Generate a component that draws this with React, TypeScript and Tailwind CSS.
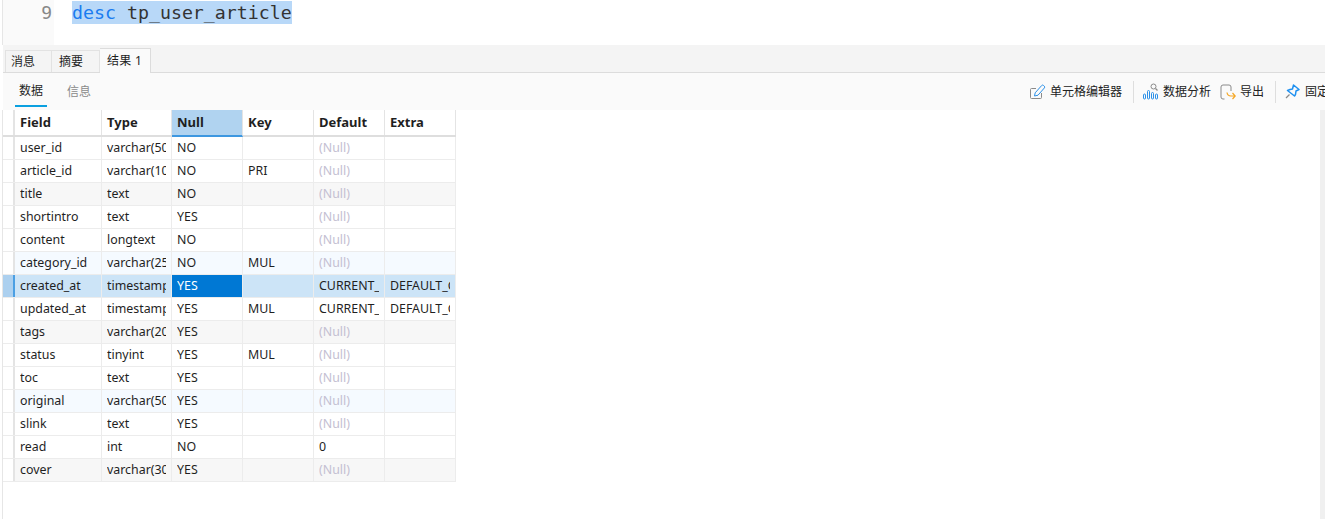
import React from "react";

const rows: string[][] = [
    ["user_id", "varchar(50", "NO", "", "(Null)", ""],
    ["article_id", "varchar(10", "NO", "PRI", "(Null)", ""],
    ["title", "text", "NO", "", "(Null)", ""],
    ["shortintro", "text", "YES", "", "(Null)", ""],
    ["content", "longtext", "NO", "", "(Null)", ""],
    ["category_id", "varchar(25", "NO", "MUL", "(Null)", ""],
    ["created_at", "timestamp", "YES", "", "CURRENT_", "DEFAULT_G"],
    ["updated_at", "timestamp", "YES", "MUL", "CURRENT_", "DEFAULT_G"],
    ["tags", "varchar(20", "YES", "", "(Null)", ""],
    ["status", "tinyint", "YES", "MUL", "(Null)", ""],
    ["toc", "text", "YES", "", "(Null)", ""],
    ["original", "varchar(50", "YES", "", "(Null)", ""],
    ["slink", "text", "YES", "", "(Null)", ""],
    ["read", "int", "NO", "", "0", ""],
    ["cover", "varchar(30", "YES", "", "(Null)", ""],
];

const headers = ["Field", "Type", "Null", "Key", "Default", "Extra"];
const widths = ["w-[87px]", "w-[70px]", "w-[71px]", "w-[71px]", "w-[71px]", "w-[71px]"];

// every third row is tinted, alternating grey and pale blue
const rowBg = (i: number) => {
    if (i === 6) return "bg-[#cce4f7]";
    if (i % 6 === 5) return "bg-[#f5faff]";
    if (i % 6 === 2) return "bg-[#f7f7f7]";
    return "bg-white";
};

const App: React.FC = () => {
    return (
        <div className="w-[1325px] h-[519px] overflow-hidden bg-white flex flex-col font-['Noto_Sans','Noto_Sans_CJK_SC',sans-serif] text-[13px] text-[#1f1f1f]">
            {/* Editor */}
            <div className="h-[45px] flex shrink-0 ml-[2px] border-l border-[#e6e6e6]">
                <div className="w-[51px] bg-[#fafafa] text-right text-[#888] font-['DejaVu_Sans_Mono',monospace] text-[18px] leading-[24px] pt-px pr-[2px]">9</div>
                <div className="pl-[18px] font-['DejaVu_Sans_Mono',monospace] text-[18.25px] leading-[23px] pt-px">
                    <span className="block bg-[#b8d8f8] text-[#333]">
                        <span className="text-[#1a7cf0]">desc</span> tp_user_article
                    </span>
                </div>
            </div>

            {/* Result tabs */}
            <div className="h-[28px] shrink-0 ml-[3px] bg-[#f4f4f4] border-b border-[#dcdcdc] flex items-end pl-[2px]">
                <div className="h-[22px] w-[47px] border border-b-0 border-[#e2e2e2] flex items-center pl-[5px] text-[12px]">消息</div>
                <div className="h-[22px] w-[48px] border border-b-0 border-l-0 border-[#e2e2e2] flex items-center pl-[7px] text-[12px]">摘要</div>
                <div className="h-[25px] w-[51px] -mb-px bg-[#fafafa] border border-b-0 border-l-0 border-[#dcdcdc] flex items-center pl-[7px] text-[12px] tracking-[0.3px]">结果 1</div>
            </div>

            {/* Sub toolbar */}
            <div className="h-[37px] shrink-0 ml-[3px] bg-[#fafafa] flex items-center pl-[12px] text-[12px]">
                <div className="h-[30px] w-[32px] flex items-center justify-center border-b-[2px] border-[#0aa0e0] mt-[1px]">数据</div>
                <div className="ml-[20px] text-[#8a8a8a]">信息</div>
                <div className="ml-auto flex items-center whitespace-nowrap text-[#222] overflow-hidden w-[295px] shrink-0">
                    <svg className="w-[16px] h-[16px] shrink-0" viewBox="0 0 16 16" fill="none">
                        <path d="M6 4.500H1.500a1 1 0 0 0-1 1v8a1 1 0 0 0 1 1h9a1 1 0 0 0 1-1V9" stroke="#8a8a8a" />
                        <path d="M4.500 12l.7-3.200 6.500-7.300a1.200 1.200 0 0 1 1.700-.1l.9.800a1.200 1.200 0 0 1 .1 1.700L8 11.200z" stroke="#2b90e8" />
                    </svg>
                    <span className="ml-[4px]">单元格编辑器</span>
                    <span className="w-px h-[22px] bg-[#dedede] ml-[11px] mr-[9px] shrink-0" />
                    <svg className="w-[17px] h-[17px] shrink-0" viewBox="0 0 17 17" fill="none">
                        <rect x="0.500" y="11" width="2" height="5" rx="1" stroke="#2b90e8" />
                        <rect x="4.500" y="7.500" width="2" height="8.500" rx="1" stroke="#2b90e8" />
                        <rect x="8.500" y="9.500" width="2" height="6.500" rx="1" stroke="#2b90e8" />
                        <rect x="12.500" y="11" width="2" height="5" rx="1" stroke="#2b90e8" />
                        <circle cx="10.500" cy="3.500" r="2.500" stroke="#8a8a8a" />
                        <path d="M12.500 5.500l2 2" stroke="#8a8a8a" strokeWidth="1.300" />
                    </svg>
                    <span className="ml-[3px]">数据分析</span>
                    <svg className="w-[16px] h-[16px] shrink-0 ml-[9px]" viewBox="0 0 16 16" fill="none">
                        <path d="M4.500 15H3a2 2 0 0 1-2-2V3a2 2 0 0 1 2-2h6a2 2 0 0 1 2 2v4" stroke="#8a8a8a" />
                        <path d="M7 8.500c.3 2.500 2 3.500 4 3.500h4M12.500 9l2.700 3-2.700 3" stroke="#f5a623" strokeWidth="1.200" />
                    </svg>
                    <span className="ml-[4px]">导出</span>
                    <span className="w-px h-[22px] bg-[#dedede] ml-[11px] mr-[9px] shrink-0" />
                    <svg className="w-[15px] h-[15px] shrink-0" viewBox="0 0 15 15" fill="none">
                        <path d="M8.500 1l5.500 4.500-3 1.500-.5 3.500-1 1.500L2.500 6.500l2.500-1 2.500-.5z" stroke="#1e90f0" strokeWidth="1.500" strokeLinejoin="round" />
                        <path d="M4.500 10.500L1 14" stroke="#8a8a8a" strokeWidth="1.200" />
                    </svg>
                    <span className="ml-[5px]">固定</span>
                </div>
            </div>

            {/* Grid with the scrollbar track on its right */}
            <div className="flex-1 ml-[2px] border-l border-[#e6e6e6] flex justify-between text-[12.4px]">
                <div className="w-fit flex flex-col">
                    <div className="flex h-[27px] shrink-0 border-b-2 border-[#dedede]">
                        <div className="w-[12px] border-r-2 border-[#e4e4e4] shrink-0" />
                        {headers.map((h, i) => (
                            <div
                                key={h}
                                className={`${widths[i]} shrink-0 flex items-center pl-[5px] font-bold text-[13px] border-r border-[#e4e4e4] ${
                                    i === 2 ? "bg-[#b0d3f0] border-b-2 h-[27px] border-b-[#3d97e0]" : ""
                                }`}
                            >
                                {h}
                            </div>
                        ))}
                    </div>
                    {rows.map((row, r) => (
                        <div key={row[0]} className={`flex h-[23px] shrink-0 border-b border-[#ececec] ${rowBg(r)}`}>
                            <div
                                className={`w-[12px] shrink-0 border-r-2 ${
                                    r === 6 ? "bg-[#acd0ef] border-[#4b9fe3]" : "bg-white border-[#e4e4e4]"
                                }`}
                            />
                            {row.map((cell, c) => (
                                <div
                                    key={c}
                                    className={`${widths[c]} shrink-0 flex items-center px-[5px] border-r border-[#ececec] whitespace-nowrap ${
                                        cell === "(Null)" ? "text-[#c4c0d2]" : ""
                                    } ${r === 6 && c === 2 ? "bg-[#0078d4] text-white" : ""}`}
                                >
                                    <span className="block w-full overflow-hidden">{cell}</span>
                                </div>
                            ))}
                        </div>
                    ))}
                </div>
                <div className="w-[5px] bg-[#f0f0f0]" />
            </div>
        </div>
    );
};

export default App;
